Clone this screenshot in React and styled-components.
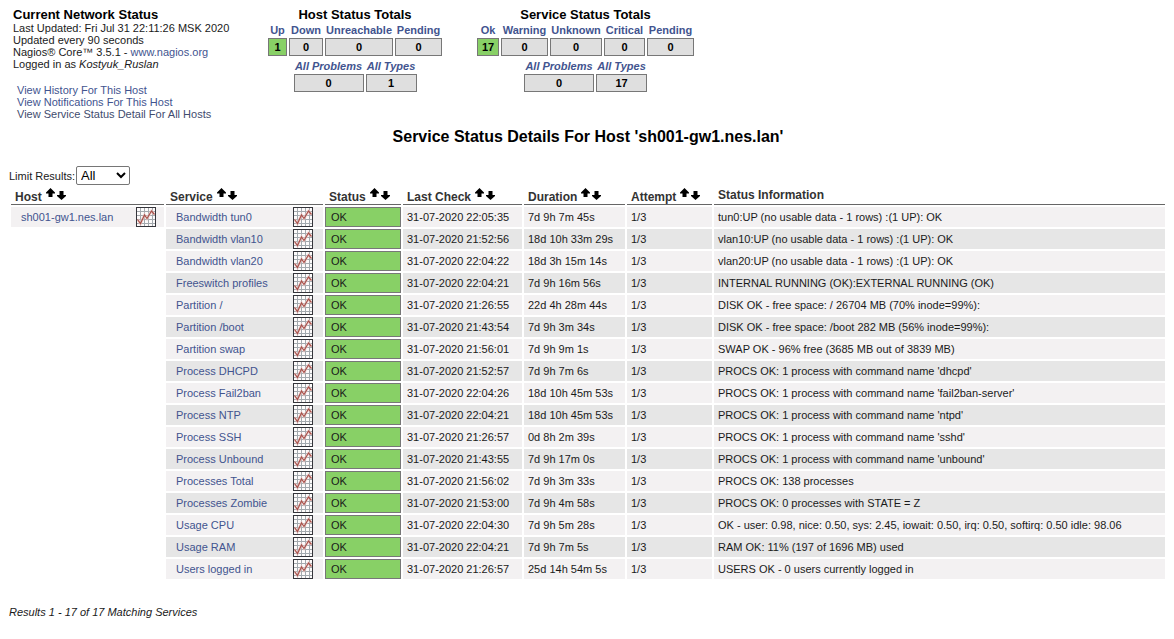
import React from 'react';
import styled, { createGlobalStyle } from 'styled-components';

const GlobalStyle = createGlobalStyle`
  body {
    margin: 0;
    background: #fff;
    color: #1a1a1a;
    font: 11px/12px "Liberation Sans", Arial, Helvetica, sans-serif;
  }
`;

const Page = styled.main`
  padding: 7px 7px 20px 9px;
`;

const Link = styled.a`
  color: ${(p) => (p.$visited ? '#414c6e' : '#42548f')};
  text-decoration: none;
`;

const Header = styled.header`
  display: flex;
  align-items: flex-start;
  min-height: 120px;
`;

const Info = styled.section`
  flex: none;
  width: 253px;
  padding-left: 4px;
`;

const InfoTitle = styled.h1`
  margin: 0;
  font-size: 13px;
  line-height: 15px;
  color: #000;
`;

const InfoLine = styled.div`
  line-height: 12px;
  white-space: nowrap;
`;

const InfoLinks = styled.nav`
  display: flex;
  flex-direction: column;
  align-items: flex-start;
  margin-top: 14px;
  padding-left: 4px;
  white-space: nowrap;
`;

const Totals = styled.section`
  display: flex;
  flex: none;
  flex-direction: column;
  align-items: center;
  margin-right: 31px;
`;

const TotalsTitle = styled.h2`
  margin: 0;
  font-size: 13px;
  line-height: 15px;
  color: #000;
`;

const TotalsTable = styled.table`
  table-layout: fixed;
  width: ${(p) => p.$width}px;
  border-collapse: separate;
  border-spacing: 2px;
  text-align: center;
  font-weight: bold;
`;

const TotalsHead = styled.th`
  width: ${(p) => p.$width}px;
  padding: 0;
  height: 12px;
  white-space: nowrap;
  font-style: ${(p) => (p.$italic ? 'italic' : 'normal')};
`;

const TotalsLabel = styled.div`
  display: flex;
  justify-content: center;
`;

const Count = styled.td`
  box-sizing: border-box;
  height: 18px;
  padding: 0;
  border: 1px solid #777;
  background: ${(p) => (p.$active ? '#88d066' : '#dfdfdf')};
  color: #000;
`;

const Heading = styled.h2`
  margin: 0 0 19px;
  font-size: 16px;
  line-height: 20px;
  text-align: center;
  color: #000;
`;

const Limit = styled.div`
  display: flex;
  align-items: center;
  gap: 1px;
`;

const Select = styled.select`
  box-sizing: border-box;
  width: 54px;
  height: 19px;
  padding: 0;
  border: 1px solid #767676;
  border-radius: 2px;
  background: #fff;
  color: #000;
  font: 13px "Liberation Sans", Arial, sans-serif;
`;

const StatusTable = styled.table`
  table-layout: fixed;
  width: 100%;
  border-collapse: separate;
  border-spacing: 2px;
`;

const Col = styled.col`
  width: ${(p) => (p.$width ? `${p.$width}px` : 'auto')};
`;

const ColumnHead = styled.th`
  box-sizing: border-box;
  height: 18px;
  padding: 0 4px;
  border-bottom: 1px solid #666;
  font-size: 12px;
  text-align: left;
  vertical-align: top;
  white-space: nowrap;
  color: #333;
`;

const HeadLabel = styled.div`
  display: flex;
  align-items: flex-start;
  gap: 4px;
  height: 17px;
  line-height: ${(p) => (p.$sortable ? 20 : 17)}px;
`;

const SortLink = styled.a`
  display: block;
  height: 13px;
`;

const SortPair = styled.span`
  display: flex;
  gap: 2px;
`;

const Cell = styled.td`
  box-sizing: border-box;
  height: 20px;
  padding: 0 4px;
  background: ${(p) => (p.$odd ? '#e6e6e6' : '#f3f1f2')};
  white-space: nowrap;
`;

const StatusCell = styled(Cell)`
  padding: 0 5px;
  border: 1px solid #777;
  background: #88d066;
`;

const EmptyCell = styled.td`
  padding: 0;
`;

const NameRow = styled.div`
  display: flex;
  align-items: center;
  justify-content: space-between;
  padding: 0 ${(p) => (p.$host ? 4 : 6)}px 0 6px;
`;

const GraphLink = styled.a`
  display: block;
  height: 20px;
`;

const Results = styled.p`
  margin: 25px 0 0;
  font-style: italic;
`;

const GraphIcon = () => (
  <svg width="20" height="20" viewBox="0 0 20 20" display="block">
    <rect width="20" height="20" fill="#fdfbfb" />
    <path d="M4.5 1v18M8.5 1v18M12.5 1v18M16.5 1v18M1 4.5h18M1 8.5h18M1 12.5h18M1 16.5h18" stroke="#a3a9ae" fill="none" />
    <path d="M1.5 12.5L4.5 16.5L8.5 8L11 11.5L15.5 4L18.5 7.5" stroke="#f0cfcb" strokeWidth="3" strokeOpacity=".6" fill="none" />
    <path d="M1.5 12.5L4.5 16.5L8.5 8L11 11.5L15.5 4L18.5 7.5" stroke="#a8504a" strokeWidth="1.2" fill="none" />
    <rect x=".5" y=".5" width="19" height="19" stroke="#35353b" fill="none" />
  </svg>
);

const Arrow = ({ down }) => (
  <svg width="9" height="13" viewBox="0 0 9 13" display="block">
    <path
      d={down ? 'M2.5 4h4v4H9v1L4.5 13L0 9V8h2.5z' : 'M4.5 1L9 5.5v1H6.5V10h-4V6.5H0v-1z'}
      fill="#000"
    />
  </svg>
);

const hostTotals = [['Up', 1, 19], ['Down', 0, 34], ['Unreachable', 0, 68], ['Pending', 0, 47]];
const hostSums = [['All Problems', 0, 70], ['All Types', 1, 51]];
const serviceTotals = [['Ok', 17, 22], ['Warning', 0, 47], ['Unknown', 0, 52], ['Critical', 0, 41], ['Pending', 0, 47]];
const serviceSums = [['All Problems', 0, 70], ['All Types', 17, 51]];

const columns = [
  ['Host', 153],
  ['Service', 157],
  ['Status', 76],
  ['Last Check', 119],
  ['Duration', 101],
  ['Attempt', 85],
  ['Status Information', 0],
];

const services = [
  ['Bandwidth tun0', '22:05:35', '7d 9h 7m 45s', 'tun0:UP (no usable data - 1 rows) :(1 UP): OK'],
  ['Bandwidth vlan10', '21:52:56', '18d 10h 33m 29s', 'vlan10:UP (no usable data - 1 rows) :(1 UP): OK'],
  ['Bandwidth vlan20', '22:04:22', '18d 3h 15m 14s', 'vlan20:UP (no usable data - 1 rows) :(1 UP): OK'],
  ['Freeswitch profiles', '22:04:21', '7d 9h 16m 56s', 'INTERNAL RUNNING (OK):EXTERNAL RUNNING (OK)'],
  ['Partition /', '21:26:55', '22d 4h 28m 44s', 'DISK OK - free space: / 26704 MB (70% inode=99%):'],
  ['Partition /boot', '21:43:54', '7d 9h 3m 34s', 'DISK OK - free space: /boot 282 MB (56% inode=99%):'],
  ['Partition swap', '21:56:01', '7d 9h 9m 1s', 'SWAP OK - 96% free (3685 MB out of 3839 MB)'],
  ['Process DHCPD', '21:52:57', '7d 9h 7m 6s', "PROCS OK: 1 process with command name 'dhcpd'"],
  ['Process Fail2ban', '22:04:26', '18d 10h 45m 53s', "PROCS OK: 1 process with command name 'fail2ban-server'"],
  ['Process NTP', '22:04:21', '18d 10h 45m 53s', "PROCS OK: 1 process with command name 'ntpd'"],
  ['Process SSH', '21:26:57', '0d 8h 2m 39s', "PROCS OK: 1 process with command name 'sshd'"],
  ['Process Unbound', '21:43:55', '7d 9h 17m 0s', "PROCS OK: 1 process with command name 'unbound'"],
  ['Processes Total', '21:56:02', '7d 9h 3m 33s', 'PROCS OK: 138 processes'],
  ['Processes Zombie', '21:53:00', '7d 9h 4m 58s', 'PROCS OK: 0 processes with STATE = Z'],
  ['Usage CPU', '22:04:30', '7d 9h 5m 28s', 'OK - user: 0.98, nice: 0.50, sys: 2.45, iowait: 0.50, irq: 0.50, softirq: 0.50 idle: 98.06'],
  ['Usage RAM', '22:04:21', '7d 9h 7m 5s', 'RAM OK: 11% (197 of 1696 MB) used'],
  ['Users logged in', '21:26:57', '25d 14h 54m 5s', 'USERS OK - 0 users currently logged in'],
];

const TotalsGrid = ({ items, italic }) => (
  <TotalsTable $width={items.reduce((sum, item) => sum + item[2] + 2, 2)}>
    <thead>
      <tr>
        {items.map(([label, , width]) => (
          <TotalsHead key={label} $width={width} $italic={italic}>
            <TotalsLabel><Link href="#">{label}</Link></TotalsLabel>
          </TotalsHead>
        ))}
      </tr>
    </thead>
    <tbody>
      <tr>
        {items.map(([label, count], i) => (
          <Count key={label} $active={!italic && i === 0}>{count}</Count>
        ))}
      </tr>
    </tbody>
  </TotalsTable>
);

const NameCell = ({ name, host, odd }) => (
  <Cell $odd={odd}>
    <NameRow $host={host}>
      <Link href="#">{name}</Link>
      <GraphLink href="#" aria-label={`Graph for ${name}`}><GraphIcon /></GraphLink>
    </NameRow>
  </Cell>
);

export default function App() {
  return (
    <Page>
      <GlobalStyle />
      <Header>
        <Info>
          <InfoTitle>Current Network Status</InfoTitle>
          <InfoLine>Last Updated: Fri Jul 31 22:11:26 MSK 2020</InfoLine>
          <InfoLine>Updated every 90 seconds</InfoLine>
          <InfoLine>Nagios® Core™ 3.5.1 - <Link href="#">www.nagios.org</Link></InfoLine>
          <InfoLine>Logged in as <i>Kostyuk_Ruslan</i></InfoLine>
          <InfoLinks>
            <Link href="#">View History For This Host</Link>
            <Link href="#">View Notifications For This Host</Link>
            <Link href="#" $visited>View Service Status Detail For All Hosts</Link>
          </InfoLinks>
        </Info>
        <Totals>
          <TotalsTitle>Host Status Totals</TotalsTitle>
          <TotalsGrid items={hostTotals} />
          <TotalsGrid items={hostSums} italic />
        </Totals>
        <Totals>
          <TotalsTitle>Service Status Totals</TotalsTitle>
          <TotalsGrid items={serviceTotals} />
          <TotalsGrid items={serviceSums} italic />
        </Totals>
      </Header>
      <Heading>Service Status Details For Host 'sh001-gw1.nes.lan'</Heading>
      <Limit>
        <label htmlFor="limit">Limit Results:</label>
        <Select id="limit" defaultValue="All">
          <option>All</option>
          <option>50</option>
          <option>100</option>
        </Select>
      </Limit>
      <StatusTable>
        <colgroup>
          {columns.map(([label, width]) => <Col key={label} $width={width} />)}
        </colgroup>
        <thead>
          <tr>
            {columns.map(([label, sortable]) => (
              <ColumnHead key={label}>
                <HeadLabel $sortable={sortable > 0}>
                  {label}
                  {sortable > 0 && (
                    <SortPair>
                      <SortLink href="#" aria-label={`Sort by ${label} ascending`}><Arrow /></SortLink>
                      <SortLink href="#" aria-label={`Sort by ${label} descending`}><Arrow down /></SortLink>
                    </SortPair>
                  )}
                </HeadLabel>
              </ColumnHead>
            ))}
          </tr>
        </thead>
        <tbody>
          {services.map(([name, time, duration, info], i) => {
            const odd = i % 2 === 1;
            return (
              <tr key={name}>
                {i === 0 ? <NameCell name="sh001-gw1.nes.lan" host /> : <EmptyCell />}
                <NameCell name={name} odd={odd} />
                <StatusCell>OK</StatusCell>
                <Cell $odd={odd}>31-07-2020 {time}</Cell>
                <Cell $odd={odd}>{duration}</Cell>
                <Cell $odd={odd}>1/3</Cell>
                <Cell $odd={odd}>{info}</Cell>
              </tr>
            );
          })}
        </tbody>
      </StatusTable>
      <Results>Results 1 - 17 of 17 Matching Services</Results>
    </Page>
  );
}
